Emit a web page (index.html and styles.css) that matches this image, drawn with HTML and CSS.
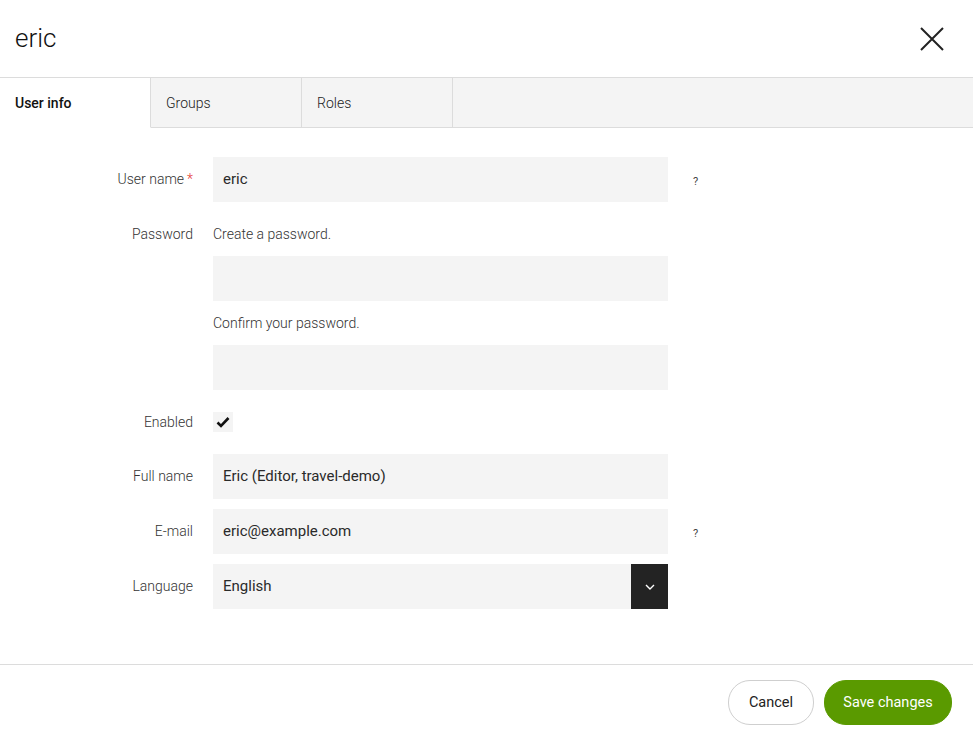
FILE: index.html
```html
<!DOCTYPE html>
<html>
<head>
<meta charset="utf-8">
<link rel="stylesheet" href="styles.css">
</head>
<body>
<div class="dialog">
  <div class="header">
    <div class="title">eric</div>
    <button class="close" aria-label="Close">
      <svg width="24" height="24" viewBox="0 0 24 24"><path d="M1 1L23 23M23 1L1 23" stroke="#222" stroke-width="2" fill="none"/></svg>
    </button>
  </div>
  <div class="tabs">
    <div class="tab active">User info</div>
    <div class="tab">Groups</div>
    <div class="tab">Roles</div>
    <div class="tab-rest"></div>
  </div>
  <div class="form">
    <div class="row row-input">
      <div class="label">User name<span class="req">*</span></div>
      <div class="field"><div class="input">eric</div></div>
      <div class="help">?</div>
    </div>
    <div class="row row-pass">
      <div class="label label-short">Password</div>
      <div class="field">
        <div class="hint">Create a password.</div>
        <div class="input"></div>
        <div class="hint">Confirm your password.</div>
        <div class="input"></div>
      </div>
    </div>
    <div class="row row-check">
      <div class="label label-short">Enabled</div>
      <div class="field">
        <div class="checkbox">
          <svg width="14" height="12" viewBox="0 0 14 12"><path d="M1.5 6.5L5 10L12.5 2" stroke="#111" stroke-width="2.6" fill="none"/></svg>
        </div>
      </div>
    </div>
    <div class="row row-input">
      <div class="label">Full name</div>
      <div class="field"><div class="input">Eric (Editor, travel-demo)</div></div>
    </div>
    <div class="row row-input tight">
      <div class="label">E-mail</div>
      <div class="field"><div class="input">eric@example.com</div></div>
      <div class="help">?</div>
    </div>
    <div class="row row-input tight">
      <div class="label">Language</div>
      <div class="field">
        <div class="select">
          <div class="select-value">English</div>
          <div class="select-btn">
            <svg width="10" height="6" viewBox="0 0 10 6"><path d="M1 1L5 5L9 1" stroke="#fff" stroke-width="1.4" fill="none"/></svg>
          </div>
        </div>
      </div>
    </div>
  </div>
  <div class="footer">
    <button class="btn btn-cancel">Cancel</button>
    <button class="btn btn-save">Save changes</button>
  </div>
</div>
</body>
</html>
```
FILE: styles.css
```css
html, body {
  margin: 0;
  padding: 0;
  background: #fff;
}
body {
  font-family: Roboto, "Liberation Sans", sans-serif;
  color: #222;
}
.dialog {
  display: flex;
  flex-direction: column;
  height: 740px;
}
.header {
  height: 77px;
  display: flex;
  align-items: center;
  justify-content: space-between;
  padding: 0 29px 0 15px;
}
.title {
  font-size: 26px;
  font-weight: 300;
  color: #111;
  margin-top: -2px;
}
.close {
  border: 0;
  background: none;
  padding: 0;
  width: 24px;
  height: 24px;
  display: flex;
  cursor: pointer;
  margin-top: 1px;
}
.tabs {
  display: flex;
  height: 50px;
  border-top: 1px solid #dcdcdc;
}
.tab {
  width: 151px;
  border-right: 1px solid #dcdcdc;
  border-bottom: 1px solid #dcdcdc;
  background: #f4f4f4;
  display: flex;
  align-items: center;
  padding-left: 15px;
  box-sizing: border-box;
  font-size: 14px;
  font-weight: 300;
  color: #222;
}
.tab.active {
  background: #fff;
  border-bottom-color: transparent;
  font-weight: 500;
  color: #111;
}
.tab-rest {
  flex: 1;
  background: #f4f4f4;
  border-bottom: 1px solid #dcdcdc;
}
.form {
  flex: 1;
  padding-top: 29px;
}
.row {
  display: grid;
  grid-template-columns: 193px 455px auto;
  column-gap: 20px;
  align-items: start;
}
.label {
  text-align: right;
  font-size: 14px;
  font-weight: 300;
  color: #333;
  line-height: 45px;
}
.label-short {
  line-height: 20px;
}
.req {
  color: #e53935;
  margin-left: 3px;
}
.input {
  height: 45px;
  background: #f4f4f4;
  box-sizing: border-box;
  padding-left: 10px;
  font-size: 15px;
  line-height: 45px;
  color: #2a2a2a;
}
.help {
  font-size: 11px;
  height: 45px;
  box-sizing: border-box;
  padding-top: 4px;
  line-height: 41px;
  color: #444;
  margin-left: 5px;
}
.hint {
  font-size: 14px;
  font-weight: 300;
  color: #333;
  line-height: 20px;
  margin-bottom: 12px;
}
.row-pass {
  margin-top: 22px;
}
.row-pass .input {
  margin-bottom: 12px;
}
.row-pass .input:last-child {
  margin-bottom: 0;
}
.row-check {
  margin-top: 22px;
}
.checkbox {
  width: 20px;
  height: 20px;
  background: #f4f4f4;
  display: flex;
  align-items: center;
  justify-content: center;
}
.row-check + .row {
  margin-top: 22px;
}
.tight {
  margin-top: 10px;
}
.select {
  display: flex;
  height: 45px;
  background: #f4f4f4;
}
.select-value {
  flex: 1;
  padding-left: 10px;
  font-size: 15px;
  line-height: 45px;
  color: #2a2a2a;
}
.select-btn {
  width: 37px;
  background: #232323;
  display: flex;
  align-items: center;
  justify-content: center;
}
.footer {
  border-top: 1px solid #dcdcdc;
  padding: 15px 21px 15px 0;
  display: flex;
  justify-content: flex-end;
  gap: 10px;
}
.btn {
  height: 45px;
  border-radius: 22px;
  font-family: Roboto, "Liberation Sans", sans-serif;
  font-size: 14.5px;
  padding: 0;
  cursor: pointer;
}
.btn-cancel {
  width: 86px;
  background: #fff;
  border: 1px solid #cfcfcf;
  color: #222;
}
.btn-save {
  width: 128px;
  background: #5a9a00;
  border: 1px solid #5a9a00;
  color: #fff;
}
```
